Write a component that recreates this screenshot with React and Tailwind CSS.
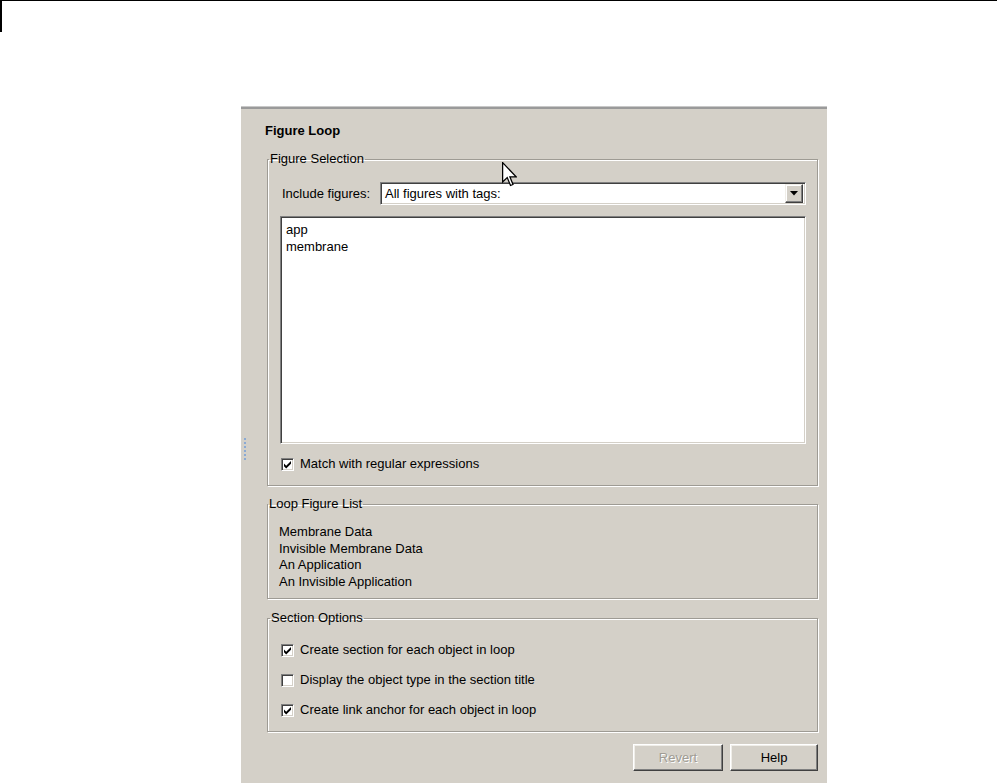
import React from "react";

const font = { fontFamily: '"Liberation Sans", Arial, sans-serif' };

function CheckBox({ checked }) {
  return (
    <span className="relative flex h-[13px] w-[13px] shrink-0 items-center justify-center border border-t-[#808080] border-l-[#808080] border-b-white border-r-white bg-white shadow-[inset_1px_1px_0_#404040,inset_-1px_-1px_0_#d4d0c8]">
      {checked && (
        <svg width="9" height="9" viewBox="0 0 9 9">
          <path d="M1 3.5 L3.2 5.7 L8 1 L8 3.8 L3.2 8.5 L1 6.3 Z" fill="#000" />
        </svg>
      )}
    </span>
  );
}

function CheckRow({ checked, label }) {
  return (
    <div className="flex h-4 items-center gap-[6px]">
      <CheckBox checked={checked} />
      <span className="leading-4">{label}</span>
    </div>
  );
}

function Group({ title, className, children }) {
  return (
    <fieldset
      className={
        "mr-[9px] ml-[26px] border border-[#9e9b94] shadow-[inset_1px_1px_0_#fff,1px_1px_0_#fff] " +
        className
      }
    >
      <legend className="ml-[-11px] px-[1px] leading-4">{title}</legend>
      {children}
    </fieldset>
  );
}

function Button({ children, disabled, w }) {
  return (
    <button
      className={
        "flex h-[27px] items-center justify-center border border-t-white border-l-white border-b-[#404040] border-r-[#404040] bg-[#d4d0c8] shadow-[inset_-1px_-1px_0_#808080,inset_1px_1px_0_#f0eee9] " +
        w +
        (disabled
          ? " text-[#a09c94] [text-shadow:1px_1px_0_#fff]"
          : " text-black")
      }
    >
      {children}
    </button>
  );
}

export default function App() {
  return (
    <div
      className="relative h-[783px] w-[997px] overflow-hidden bg-white text-[13px] text-black"
      style={font}
    >
      <div className="border-t border-black">
        <div className="h-[31px] w-[2px] bg-black" />
      </div>

      <div className="relative mt-[75px] ml-[241px] w-[586px] border-t-2 border-[#9a9a9a] bg-[#d4d0c8] pt-[14px] pb-[20px] shadow-[0_-1px_0_#c8c8c8]">
        {/* splitter grip */}
        <div className="absolute top-[329px] left-[3px] flex flex-col gap-[2px]">
          {[0, 1, 2, 3, 4, 5].map((i) => (
            <div key={i} className="h-[2px] w-[2px] bg-[#8aaad4]" />
          ))}
        </div>

        <div className="ml-[24px] h-4 leading-4 font-bold">Figure Loop</div>

        <Group title="Figure Selection" className="mt-[12px] pt-[15px] pr-[11px] pb-[13px] pl-[12px]">
          <div className="flex h-[23px] items-center">
            <span className="ml-[2px] w-[98px] shrink-0">Include figures:</span>
            <div className="flex h-[23px] flex-1 items-center border border-t-[#808080] border-l-[#808080] border-b-white border-r-white bg-white shadow-[inset_1px_1px_0_#404040,inset_-1px_-1px_0_#d4d0c8]">
              <span className="ml-[4px] flex-1">All figures with tags:</span>
              <div className="mr-[2px] flex h-[19px] w-[18px] items-center justify-center border border-t-[#f0eee9] border-l-[#f0eee9] border-b-[#404040] border-r-[#404040] bg-[#d4d0c8] shadow-[inset_-1px_-1px_0_#808080,inset_1px_1px_0_#fff]">
                <svg width="8" height="5" viewBox="0 0 8 5">
                  <path d="M0 0 H8 L4 4.5 Z" fill="#000" />
                </svg>
              </div>
            </div>
          </div>
          <div className="mt-[11px] h-[228px] border border-t-[#808080] border-l-[#808080] border-b-white border-r-white bg-white px-[5px] pt-[4px] shadow-[inset_1px_1px_0_#404040,inset_-1px_-1px_0_#d4d0c8]">
            <div className="leading-[17px]">app</div>
            <div className="leading-[17px]">membrane</div>
          </div>
          <div className="mt-[12px] ml-[1px]">
            <CheckRow checked label="Match with regular expressions" />
          </div>
        </Group>

        <Group title="Loop Figure List" className="mt-[10px] pt-[12px] pb-[8px] pl-[11px]">
          <div className="leading-[16.5px]">Membrane Data</div>
          <div className="leading-[16.5px]">Invisible Membrane Data</div>
          <div className="leading-[16.5px]">An Application</div>
          <div className="leading-[16.5px]">An Invisible Application</div>
        </Group>

        <Group title="Section Options" className="mt-[11px] flex flex-col gap-[14px] pt-[16px] pb-[13px] pl-[13px]">
          <CheckRow checked label="Create section for each object in loop" />
          <CheckRow checked={false} label="Display the object type in the section title" />
          <CheckRow checked label="Create link anchor for each object in loop" />
        </Group>

        <div className="mt-[12px] mr-[9px] flex justify-end gap-[7px]">
          <Button disabled w="w-[90px]">Revert</Button>
          <Button w="w-[88px]">Help</Button>
        </div>
      </div>

      {/* mouse cursor */}
      <svg
        className="absolute top-[162px] left-[502px]"
        width="15"
        height="25"
        viewBox="0 0 12 20"
      >
        <path
          d="M0.5 0.5 L0.5 16 L4.2 12.5 L6.8 18.8 L8.8 18 L6.3 11.8 L11.3 11.8 Z"
          fill="#fff"
          stroke="#000"
          strokeWidth="1"
          strokeLinejoin="miter"
        />
      </svg>
    </div>
  );
}
